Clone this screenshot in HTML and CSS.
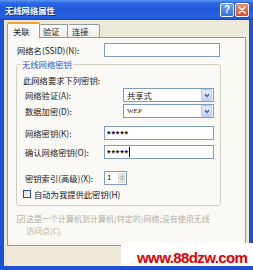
FILE: index.html
```html
<!DOCTYPE html>
<html>
<head>
<meta charset="utf-8">
<link rel="stylesheet" href="styles.css">
</head>
<body>
<div class="window">
  <div class="titlebar">
    <span class="title">无线网络属性</span>
    <span class="tbtn help">?</span>
    <span class="tbtn close"><svg width="8" height="8" viewBox="0 0 8 8"><path d="M1 1L7 7M7 1L1 7" stroke="#fff" stroke-width="1.6" stroke-linecap="round"/></svg></span>
  </div>
  <div class="frame">
    <div class="dlg">
      <div class="tabs">
        <div class="tab active">关联</div>
        <div class="tab t2">验证</div>
        <div class="tab t3">连接</div>
      </div>
      <div class="panel">
        <div class="row ssid">
          <span class="lbl">网络名(SSID)(N):</span>
          <span class="input"></span>
        </div>
        <div class="group">
          <span class="legend">无线网络密钥</span>
          <div class="need">此网络要求下列密钥:</div>
          <div class="row sel r-a">
            <span class="lbl">网络验证(A):</span>
            <span class="select"><span class="val">共享式</span><span class="drop"><svg width="6" height="5" viewBox="0 0 6 5"><path d="M1 1.2L3 3.4L5 1.2" fill="none" stroke="#4D6185" stroke-width="1.4"/></svg></span></span>
          </div>
          <div class="row sel r-d">
            <span class="lbl">数据加密(D):</span>
            <span class="select"><span class="val latin">WEP</span><span class="drop"><svg width="6" height="5" viewBox="0 0 6 5"><path d="M1 1.2L3 3.4L5 1.2" fill="none" stroke="#4D6185" stroke-width="1.4"/></svg></span></span>
          </div>
          <div class="row key r-k">
            <span class="lbl">网络密钥(K):</span>
            <span class="input pw">*****</span>
          </div>
          <div class="row key r-o">
            <span class="lbl">确认网络密钥(O):</span>
            <span class="input pw">*****<span class="caret"></span></span>
          </div>
          <div class="row key r-x">
            <span class="lbl">密钥索引(高级)(X):</span>
            <span class="spin"><span class="num">1</span><span class="spinbtns"><span class="sb"><svg width="4" height="3" viewBox="0 0 4 3"><path d="M0 3L2 0.5L4 3Z" fill="#B8B8B0"/></svg></span><span class="sb"><svg width="4" height="3" viewBox="0 0 4 3"><path d="M0 0L2 2.5L4 0Z" fill="#B8B8B0"/></svg></span></span></span>
          </div>
          <div class="row chkrow">
            <span class="chk"></span>
            <span class="chklbl">自动为我提供此密钥(H)</span>
          </div>
        </div>
        <div class="adhoc">
          <span class="chk dis"><svg width="6" height="6" viewBox="0 0 6 6"><path d="M0.8 3L2.4 4.6L5.3 1.2" fill="none" stroke="#C2BFB2" stroke-width="1.2"/></svg></span>
          <span class="adtext">这是一个计算机到计算机(特定的)网络;没有使用无线<br>访问点(C)</span>
        </div>
      </div>
    </div>
  </div>
</div>
<div class="watermark">www.88dzw.com</div>
</body>
</html>
```
FILE: styles.css
```css
* { box-sizing: border-box; }
html, body { margin: 0; padding: 0; }
body {
  width: 253px;
  height: 270px;
  overflow: hidden;
  position: relative;
  font-family: "Noto Sans CJK SC", "Noto Sans CJK JP", sans-serif;
  font-size: 8.3px;
  color: #1a1a1a;
  background: #1F52D0;
}
.window {
  width: 253px;
  height: 270px;
  display: flex;
  flex-direction: column;
  background: #1F52D0;
}
.titlebar {
  height: 20px;
  flex: none;
  display: flex;
  align-items: center;
  padding: 0 4px 0 5px;
  background: linear-gradient(#5b97f6 0, #2c68e2 3px, #1f59d9 45%, #2563e3 85%, #1948c4 100%);
}
.title {
  flex: 1;
  color: #fff;
  font-weight: bold;
  line-height: 10px;
  text-shadow: 1px 1px 0 #0d2c90;
}
.tbtn {
  width: 14px;
  height: 14px;
  border: 1px solid #f4f6ff;
  border-radius: 2px;
  display: flex;
  align-items: center;
  justify-content: center;
}
.help {
  margin-right: 1px;
  background: linear-gradient(#6d9ff6, #3a6fe0);
  color: #fff;
  font-family: "Liberation Sans", sans-serif;
  font-weight: bold;
  font-size: 10px;
  line-height: 10px;
}
.close { background: linear-gradient(#ef9065, #d9482c); }
.frame {
  flex: 1;
  display: flex;
  padding: 0 4px 4px 4px;
}
.dlg {
  flex: 1;
  background: #ECE9D8;
  padding: 2px 3px 0 3px;
  display: flex;
  flex-direction: column;
}
.tabs {
  display: flex;
  align-items: flex-end;
  height: 15px;
  flex: none;
  position: relative;
  z-index: 1;
}
.tab {
  height: 13px;
  border: 1px solid #919B9C;
  border-bottom: none;
  border-radius: 2px 2px 0 0;
  background: linear-gradient(#ffffff, #ecebe5);
  display: flex;
  align-items: center;
  padding-left: 3px;
  line-height: 10px;
}
.tab.active {
  width: 33px;
  height: 16px;
  margin-bottom: -1px;
  padding-left: 5px;
  padding-bottom: 1px;
  background: #FAF9F5;
  border-top: 2px solid #EFA23A;
}
.t2 { width: 28px; border-left: none; }
.t3 { width: 32px; border-left: none; padding-left: 4px; }
.panel {
  height: 209px;
  flex: none;
  border: 1px solid #919B9C;
  background: #FAF9F5;
  padding: 5px 0 0 0;
}
.row { display: flex; align-items: center; }
.lbl { flex: none; line-height: 10px; }
.ssid { height: 14px; padding-left: 9px; }
.ssid .lbl { width: 87px; }
.input {
  display: flex;
  align-items: center;
  height: 14px;
  border: 1px solid #7F9DB9;
  background: #fff;
}
.ssid .input { width: 116px; }
.group {
  position: relative;
  margin: 7px 0 0 8px;
  width: 205px;
  height: 142px;
  border: 1px solid #D0D0BF;
  border-radius: 3px;
  padding-left: 6px;
}
.legend {
  position: absolute;
  top: -6px;
  left: 4px;
  padding: 0 1px;
  line-height: 10px;
  color: #2F55C8;
  background: #FAF9F5;
}
.need { margin-top: 10px; line-height: 10px; }
.r-a, .r-d, .r-k, .r-o, .r-x { padding-left: 2px; }
.sel { height: 14px; }
.sel .lbl { width: 98px; }
.r-a { margin-top: 3px; }
.r-d { margin-top: 2px; }
.select {
  width: 91px;
  height: 14px;
  border: 1px solid #7F9DB9;
  background: #fff;
  display: flex;
  align-items: center;
  padding: 1px;
}
.val { flex: 1; padding-left: 2px; line-height: 10px; }
.val.latin { font-family: "Liberation Serif", serif; font-size: 7px; }
.drop {
  width: 11px;
  height: 12px;
  border: 1px solid #B9CBF3;
  border-radius: 1px;
  background: linear-gradient(#E3EBFD, #C3D5FC);
  display: flex;
  align-items: center;
  justify-content: center;
}
.key { height: 14px; }
.key .lbl { width: 79px; }
.r-k { margin-top: 8px; }
.r-o { margin-top: 5px; }
.r-x { margin-top: 12px; }
.key .input { width: 110px; }
.pw {
  padding: 2px 0 0 2px;
  font-family: "Liberation Sans", sans-serif;
  font-weight: bold;
  font-size: 9px;
  letter-spacing: 0.9px;
  color: #111;
}
.caret {
  display: inline-block;
  width: 1px;
  height: 10px;
  background: #000;
  margin-top: -2px;
}
.spin {
  width: 23px;
  height: 14px;
  border: 1px solid #7F9DB9;
  background: #fff;
  display: flex;
}
.num {
  flex: 1;
  padding-left: 2px;
  font-family: "Liberation Sans", sans-serif;
  font-size: 8px;
  line-height: 12px;
  color: #111;
}
.spinbtns {
  width: 8px;
  display: flex;
  flex-direction: column;
  padding: 1px 1px 1px 0;
}
.sb {
  flex: 1;
  border: 1px solid #D8D8D0;
  background: #F1F1EC;
  display: flex;
  align-items: center;
  justify-content: center;
}
.chkrow { margin-top: 4px; height: 10px; }
.chk {
  width: 8px;
  height: 8px;
  flex: none;
  border: 1px solid #25507E;
  background: linear-gradient(135deg, #DCDCD6, #FFFFFF);
  display: flex;
  align-items: center;
  justify-content: center;
}
.chklbl { margin-left: 3px; line-height: 10px; }
.adhoc {
  margin: 7px 0 0 9px;
  display: flex;
  align-items: flex-start;
}
.chk.dis {
  margin-top: 2px;
  border-color: #CAC8BB;
  background: #FAF9F5;
}
.adtext {
  margin-left: 1px;
  font-size: 8px;
  line-height: 11.6px;
  color: #B3AF9F;
}
.watermark {
  position: absolute;
  left: 121px;
  top: 243px;
  width: 132px;
  height: 23px;
  background: #fff;
  padding: 6px 0 0 16px;
  font-family: "Liberation Sans", sans-serif;
  font-weight: bold;
  font-size: 15px;
  letter-spacing: -0.6px;
  line-height: 17px;
  color: #E00000;
}
```
